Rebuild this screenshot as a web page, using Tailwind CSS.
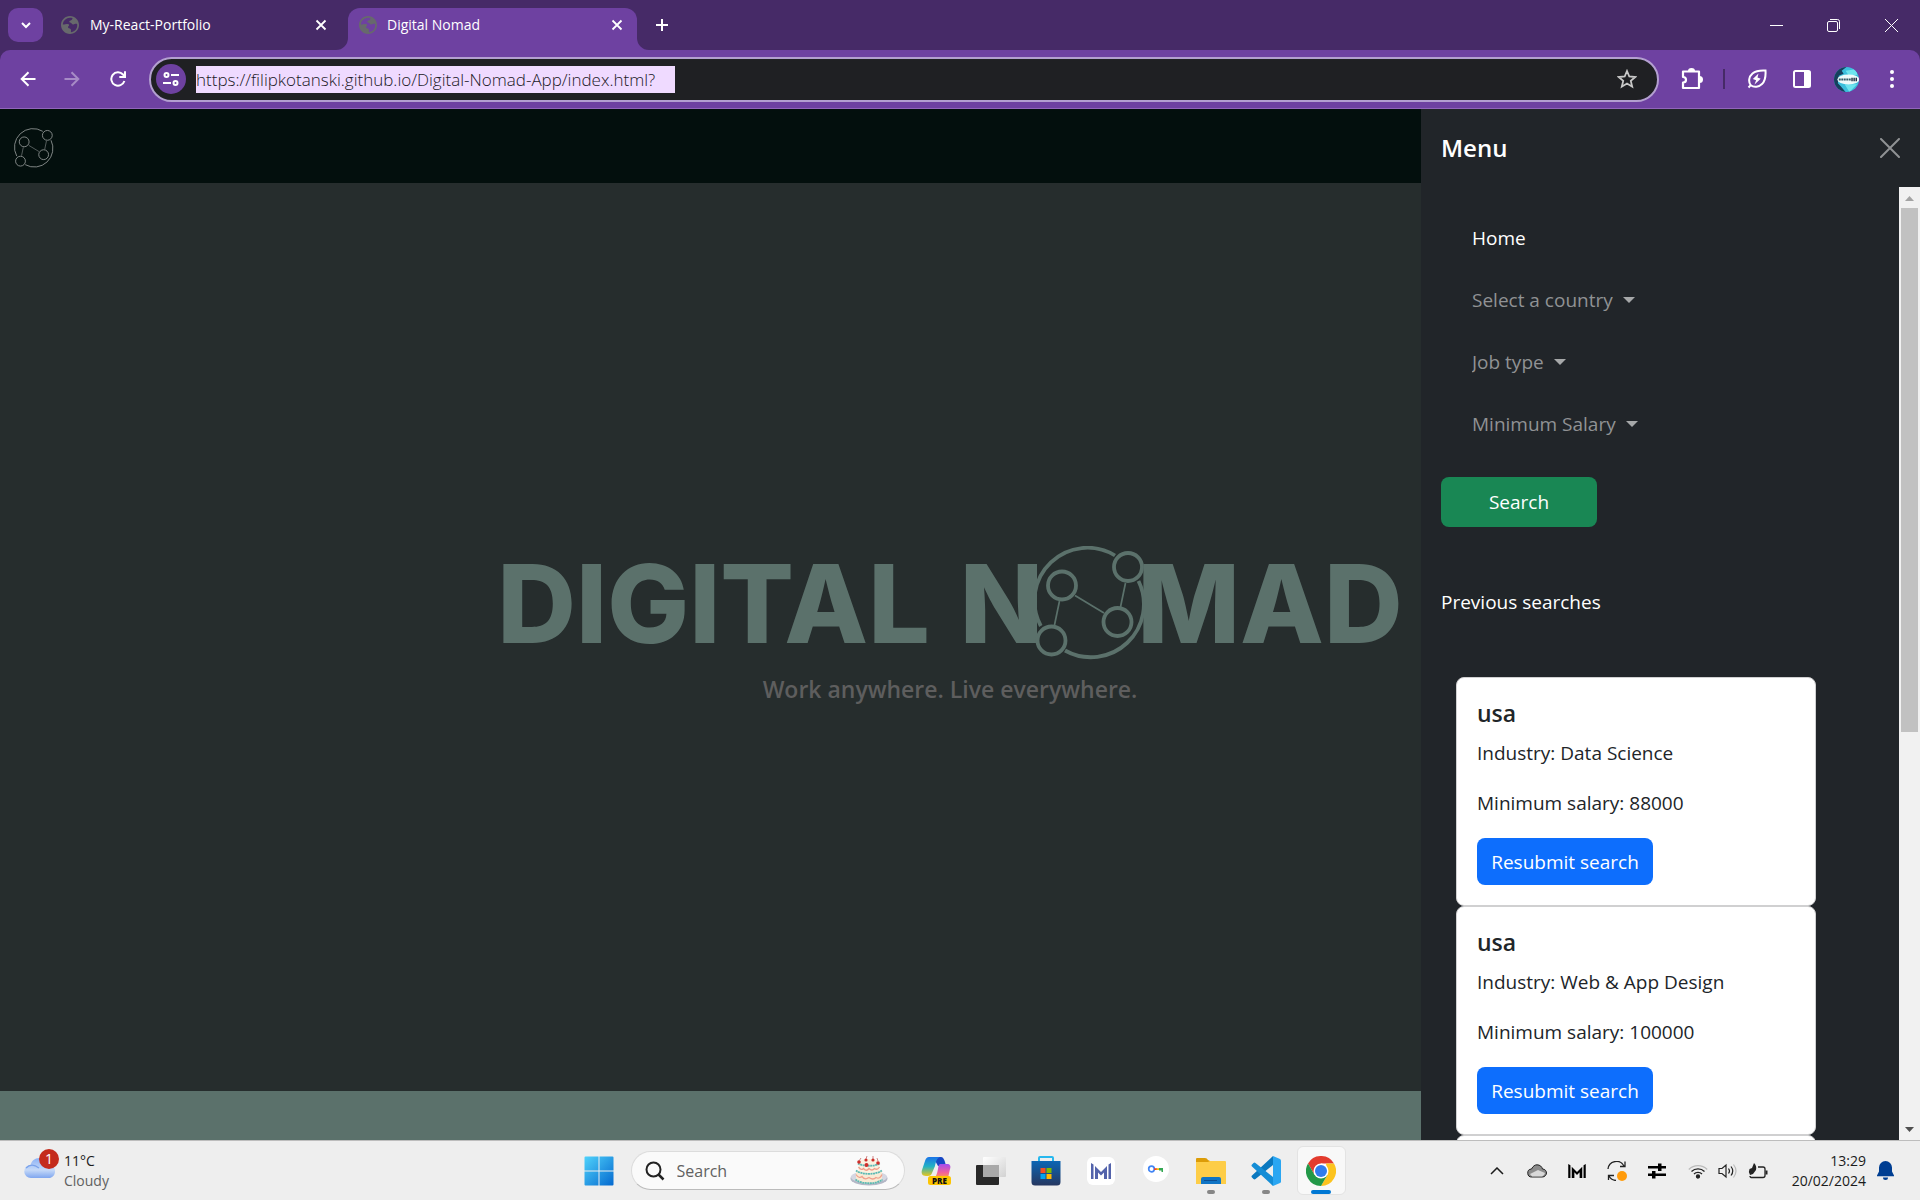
<!DOCTYPE html>
<html lang="en">
<head>
<meta charset="utf-8">
<meta name="viewport" content="width=device-width, initial-scale=1">
<title>Digital Nomad</title>
<script src="https://cdn.jsdelivr.net/npm/@tailwindcss/browser@4"></script>
</head>
<body class="flex h-screen flex-col overflow-hidden bg-[#6e41a1] font-['Open_Sans','Noto_Sans',sans-serif] text-white">

<svg class="hidden" aria-hidden="true">
  <symbol id="globe" viewBox="2 2 20 20"><path fill="#67696c" d="M12 2C6.48 2 2 6.48 2 12s4.48 10 10 10 10-4.48 10-10S17.52 2 12 2zm0 2c1 0 2 .2 2.900.5C14.500 6.500 13 7 12 7.200c-1.200.3-1 1.800.2 2 1.600.3 1.800 2 3.300 2.200 1.500.2 2.200-1.400 4.400-.4.300 1.800.1 3.500-.7 5-1.200 2.300-3.400 3.800-6 4-.6-1.200.6-2.500-.6-3.600-1-1-2.600-.4-2.800-2-.2-1.400 1.600-1.400 1.200-2.800C10.500 10.200 7 11.300 4 11.500 4.300 7.300 7.800 4 12 4z"/></symbol>
  <symbol id="tab-close" viewBox="0 0 12 12"><path d="M1.500 1.500l9 9M10.500 1.500l-9 9" fill="none" stroke="currentColor" stroke-width="1.800"/></symbol>
  <symbol id="orbit" viewBox="-1 -1 114 114">
    <g fill="none" stroke="currentColor">
      <path stroke-width="var(--ring)" d="M81 8.500A53 53 0 0 0 6.800 79M31 103.500A53 53 0 0 0 104.500 34"/>
      <circle cx="94" cy="20" r="14" stroke-width="var(--ring)"/>
      <circle cx="28" cy="38.500" r="14" stroke-width="var(--ring)"/>
      <circle cx="83.500" cy="75" r="14" stroke-width="var(--ring)"/>
      <circle cx="17.500" cy="93.500" r="14" stroke-width="var(--ring)"/>
      <path stroke-width="1.700" d="M25.500 54l-5 24M41 48.500l29 17.500M91.500 36l-5 24"/>
    </g>
  </symbol>
  <symbol id="maxthon" viewBox="0 0 20 16"><path fill="currentColor" d="M0 0l2.500 1.500V16H0zM20 0l-2.500 1.500V16H20zM4 3l6 6 6-6v13h-3V9.500l-3 3-3-3V16H4z"/></symbol>
</svg>

<!-- Tab strip -->
<header class="flex h-[50px] shrink-0 bg-[#462a67]">
  <button aria-label="Search tabs" class="mt-2 ml-2 flex h-[34px] w-[35px] items-center justify-center rounded-[10px] bg-[#6e41a1]">
    <svg class="h-3 w-3" viewBox="0 0 12 12" fill="none" stroke="#fff" stroke-width="2"><path d="M2 4l4 4 4-4"/></svg>
  </button>
  <div class="flex h-[50px] w-[305px] items-center pl-[18px] pr-[21px] text-sm">
    <svg class="h-[18px] w-[18px]"><use href="#globe"/></svg>
    <span class="ml-[11px] flex-1">My-React-Portfolio</span>
    <button aria-label="Close tab"><svg class="h-3 w-3"><use href="#tab-close"/></svg></button>
  </div>
  <div class="relative mt-2 flex h-[42px] w-[289px] items-center rounded-t-xl bg-[#6e41a1] pb-2 pl-[11px] pr-[14px] text-sm">
    <svg class="absolute bottom-0 -left-3 h-3 w-3" viewBox="0 0 12 12"><path fill="#6e41a1" d="M12 0v12H0A12 12 0 0 0 12 0z"/></svg>
    <svg class="absolute bottom-0 -right-3 h-3 w-3" viewBox="0 0 12 12"><path fill="#6e41a1" d="M0 0v12h12A12 12 0 0 1 0 0z"/></svg>
    <svg class="h-[18px] w-[18px]"><use href="#globe"/></svg>
    <span class="ml-[10px] flex-1">Digital Nomad</span>
    <button aria-label="Close tab"><svg class="h-3 w-3"><use href="#tab-close"/></svg></button>
  </div>
  <button aria-label="New tab" class="ml-[18px] flex w-[14px] items-center"><svg class="h-[14px] w-[14px]" viewBox="0 0 14 14"><path d="M7 1v12M1 7h12" stroke="#fff" stroke-width="2"/></svg></button>
  <div class="flex-1"></div>
  <button aria-label="Minimize" class="flex w-[56px] items-center justify-center"><svg class="h-[13px] w-[13px]" viewBox="0 0 13 13"><path d="M0 6.500h13" stroke="#fff"/></svg></button>
  <button aria-label="Restore" class="flex w-[58px] items-center justify-center"><svg class="h-[13px] w-[13px]" viewBox="0 0 13 13" fill="none" stroke="#fff"><rect x=".5" y="2.500" width="10" height="10" rx="1.500"/><path d="M3 .5h7.500a2 2 0 0 1 2 2V10"/></svg></button>
  <button aria-label="Close" class="flex w-[58px] items-center justify-center"><svg class="h-[13px] w-[13px]" viewBox="0 0 13 13"><path d="M0 0l13 13M13 0L0 13" stroke="#fff"/></svg></button>
</header>

<!-- Toolbar -->
<div class="shrink-0 bg-[#462a67]">
<nav aria-label="Browser" class="flex h-[59px] items-center rounded-t-[10px] border-b border-[#9165ba] bg-[#6e41a1] px-[6px]">
  <button aria-label="Back" class="flex w-11 justify-center"><svg class="h-4 w-4" viewBox="0 0 16 16" fill="none" stroke="#fff" stroke-width="2"><path d="M15.500 8H2M8.500 1.200L1.700 8l6.800 6.800"/></svg></button>
  <button aria-label="Forward" class="flex w-11 justify-center"><svg class="h-4 w-4" viewBox="0 0 16 16" fill="none" stroke="#a78bc6" stroke-width="2"><path d="M.5 8H14M7.500 1.200L14.300 8l-6.800 6.800"/></svg></button>
  <button aria-label="Reload" class="flex w-12 justify-center"><svg class="h-4 w-4" viewBox="0 0 16 16" fill="none" stroke="#fff" stroke-width="2"><path d="M14.400 10A6.700 6.700 0 1 1 13 3.500l1.800 2"/><path d="M15 .3V6H9.300"/></svg></button>
  <div class="ml-[7px] flex h-[45px] flex-1 items-center rounded-full border-2 border-[#b39fd0] bg-[#1f2023] pl-[5px] pr-[20px]">
    <button aria-label="Site information" class="flex h-[30px] w-[30px] items-center justify-center rounded-full bg-[#6e41a1]">
      <svg class="h-4 w-4" viewBox="0 0 16 16" fill="none" stroke="#fff" stroke-width="2"><circle cx="3.500" cy="4" r="2"/><path d="M8 4h8M0 12h8"/><circle cx="12.500" cy="12" r="2"/></svg>
    </button>
    <input aria-label="Address" type="text" value="https://filipkotanski.github.io/Digital-Nomad-App/index.html?" class="ml-[10px] h-[27px] w-[479px] bg-[#efdaff] text-[17px] font-light text-[#1b191f] outline-none">
    <div class="flex-1"></div>
    <button aria-label="Bookmark"><svg class="h-5 w-5" viewBox="0 0 20 20" fill="none" stroke="#c8c8c8" stroke-width="1.800"><path d="M10 2l2.300 5.500 6 .5-4.500 3.900 1.400 5.800L10 14.600l-5.200 3.100 1.400-5.800L1.700 8l6-.5z"/></svg></button>
  </div>
  <button aria-label="Extensions" class="ml-[10px] flex w-[45px] justify-center"><svg class="h-[22px] w-[22px]" viewBox="0 0 22 22" fill="none" stroke="#fff" stroke-width="2.200" stroke-linejoin="round"><path d="M2 3.500h16V20H2v-5.500c4 0 4-5.500 0-5.500z"/><path fill="#fff" stroke="none" d="M7 3a3.500 3 0 0 1 7 0zM18.500 8a3.500 3.500 0 0 1 0 7z"/></svg></button>
  <span class="ml-[9px] h-5 w-[2px] bg-[#462a67]"></span>
  <button aria-label="Energy saver" class="ml-[9px] flex w-[45px] justify-center"><svg class="h-5 w-5" viewBox="0 0 20 20" fill="none" stroke="#fff" stroke-width="2"><path d="M1.500 18.500l2.200-2.300C1 12.500 2 7.500 5.500 4.500 8.500 2 14 1.200 18.500 1.500c.3 4.500-.4 10.500-3.500 13.500s-8 3.800-11.300 1.200"/><path fill="#fff" stroke="none" d="M11.500 4.500L5.800 10l3.300 1.200-1.600 4.300 6.200-5.700-3.200-1.200z"/></svg></button>
  <button aria-label="Side panel" class="flex w-[45px] justify-center"><svg class="h-[18px] w-[18px]" viewBox="0 0 18 18"><rect x="1" y="1" width="16" height="16" rx="1.500" fill="none" stroke="#fff" stroke-width="2"/><path fill="#fff" d="M11 1h6v16h-6z"/></svg></button>
  <button aria-label="Profile" class="flex w-[45px] justify-center"><svg class="h-[25px] w-[25px]" viewBox="0 0 26 26"><defs><clipPath id="avatar"><circle cx="13" cy="13" r="13"/></clipPath></defs><g clip-path="url(#avatar)"><path fill="#3bbfdc" d="M0 0h26v26H0z"/><path fill="#173f5d" d="M0 0h13L8 4l2 3-5 2-1 8 3 3 5 6H0z"/><path fill="#6de4ee" d="M12 4l12-2v6l-8 2zM11 18l13 0-8 8z"/><ellipse cx="15" cy="13" rx="11.500" ry="5.200" fill="#eefafa"/><path stroke="#345b68" stroke-width="2.200" stroke-dasharray="2 .6" d="M5 13h13"/><path stroke="#234" stroke-width="3.500" stroke-dasharray="1.500 .7" d="M18 13h6"/></g></svg></button>
  <button aria-label="Browser menu" class="flex w-[45px] justify-center"><svg class="h-5 w-1" viewBox="0 0 4 20" fill="#fff"><circle cx="2" cy="3" r="2"/><circle cx="2" cy="10" r="2"/><circle cx="2" cy="17" r="2"/></svg></button>
</nav>
</div>

<!-- Web page -->
<div class="relative flex min-h-0 flex-1 flex-col overflow-hidden bg-[#262d2d]">
  <div class="flex h-[74px] shrink-0 items-center bg-[#030f0d] pt-1 pl-[14px]">
    <a href="#" aria-label="Digital Nomad home"><svg class="h-10 w-10 text-[#8b908f] [--ring:2.600]"><use href="#orbit"/></svg></a>
  </div>

  <main class="flex flex-1 flex-col items-center pt-[360px] pr-[20px]">
    <h1 class="flex h-[120px] items-center font-['Inter',sans-serif] text-[109px] leading-[120px] font-extrabold text-[#5b716b]">
      <span>DIGITAL</span>
      <span class="ml-[30px]">N</span>
      <svg class="-mx-[10px] h-[114px] w-[114px] [--ring:3.800]" role="img" aria-label="O"><use href="#orbit"/></svg>
      <span>MAD</span>
    </h1>
    <p class="mt-2 text-[23px] leading-9 font-semibold text-[#5e5e5e]">Work anywhere. Live everywhere.</p>
  </main>

  <footer class="h-[49px] shrink-0 bg-[#5b716b]"></footer>

  <!-- Off-canvas menu -->
  <aside class="absolute inset-y-0 right-0 flex w-[499px] flex-col bg-[#212529]">
    <div class="flex h-[78px] shrink-0 items-center justify-between px-5">
      <h2 class="text-2xl font-semibold">Menu</h2>
      <button aria-label="Close menu"><svg class="h-5 w-5" viewBox="0 0 20 20"><path d="M1 1l18 18M19 1L1 19" stroke="#909294" stroke-width="2" stroke-linecap="round"/></svg></button>
    </div>
    <div class="flex min-h-0 flex-1">
      <div class="flex-1 overflow-hidden pt-5 pl-5 text-[19px] leading-[30px]">
        <div class="pl-[31px]">
          <a href="#" class="flex h-[62px] items-center">Home</a>
          <label class="flex h-[62px] items-center gap-[10px] text-[#909294]">
            <select aria-label="Country" class="appearance-none"><option>Select a country</option></select>
            <svg class="h-[6px] w-3" viewBox="0 0 12 6"><path fill="#a6a8a9" d="M0 0h12L6 6z"/></svg>
          </label>
          <label class="flex h-[62px] items-center gap-[10px] text-[#909294]">
            <select aria-label="Job type" class="appearance-none"><option>Job type</option></select>
            <svg class="h-[6px] w-3" viewBox="0 0 12 6"><path fill="#a6a8a9" d="M0 0h12L6 6z"/></svg>
          </label>
          <label class="flex h-[62px] items-center gap-[10px] text-[#909294]">
            <select aria-label="Minimum salary" class="appearance-none"><option>Minimum Salary</option></select>
            <svg class="h-[6px] w-3" viewBox="0 0 12 6"><path fill="#a6a8a9" d="M0 0h12L6 6z"/></svg>
          </label>
        </div>
        <button class="mt-[22px] block h-[50px] w-[156px] rounded-lg bg-[#198754]">Search</button>
        <p class="mt-[60px]">Previous searches</p>
        <div class="mt-[60px] ml-[15px] w-[360px] text-[#212529]">
          <article class="rounded-lg border border-[#d0d0d1] bg-white p-5">
            <h3 class="mb-[10px] text-[23px] font-semibold">usa</h3>
            <p class="mb-5">Industry: Data Science</p>
            <p class="mb-5">Minimum salary: 88000</p>
            <button class="block h-[47px] w-[176px] rounded-lg bg-[#0d6efd] text-white">Resubmit search</button>
          </article>
          <article class="rounded-lg border border-[#d0d0d1] bg-white p-5">
            <h3 class="mb-[10px] text-[23px] font-semibold">usa</h3>
            <p class="mb-5">Industry: Web &amp; App Design</p>
            <p class="mb-5">Minimum salary: 100000</p>
            <button class="block h-[47px] w-[176px] rounded-lg bg-[#0d6efd] text-white">Resubmit search</button>
          </article>
          <div class="h-20 rounded-lg border border-[#d0d0d1] bg-white"></div>
        </div>
      </div>
      <div class="flex w-[21px] shrink-0 flex-col items-center bg-[#f1f1f1]">
        <svg class="h-[21px] w-[9px] shrink-0" viewBox="0 0 9 21"><path fill="#a3a3a3" d="M0 14h9L4.500 9z"/></svg>
        <div class="h-[55%] w-[17px] bg-[#c1c1c1]"></div>
        <div class="flex-1"></div>
        <svg class="h-[21px] w-[9px] shrink-0" viewBox="0 0 9 21"><path fill="#505050" d="M0 8h9L4.500 13z"/></svg>
      </div>
    </div>
  </aside>
</div>

<!-- Taskbar -->
<footer class="grid h-[60px] shrink-0 grid-cols-[1fr_auto_1fr] items-center border-t border-[#bdbdbd] bg-[#eeeeee] text-[#1b1b1b]">
  <button aria-label="Weather" class="flex items-center pl-6 text-left text-sm leading-5">
    <svg class="h-12 w-9" viewBox="0 4 36 48"><defs><linearGradient id="cloud" x2="0" y2="1"><stop stop-color="#8db2f5"/><stop offset=".6" stop-color="#c5d9f8"/><stop offset="1" stop-color="#7fa6ef"/></linearGradient></defs><path fill="url(#cloud)" d="M7 35a6.500 6.500 0 0 1-.5-13c1-4 4-7 9-7 5.500 0 8.500 3.500 9 8 4-1 7 2 6.500 6-.3 3.500-3 6-6 6z"/><path d="M2 25c4-4 9-3 13 0" fill="none" stroke="#7aa2ea" stroke-width="1.200"/><circle cx="25" cy="16" r="10" fill="#c42b1c"/><text x="25" y="21" text-anchor="middle" font-size="14" fill="#fff" font-family="Open Sans">1</text></svg>
    <span class="ml-1"><span class="block">11°C</span><span class="block text-[#616161]">Cloudy</span></span>
  </button>

  <div class="flex h-[59px] items-center">
    <button aria-label="Start" class="flex w-[55px] justify-center"><svg class="h-[30px] w-[30px]" viewBox="0 0 30 30"><defs><linearGradient id="win" x2="1" y2="1"><stop stop-color="#4fd2fb"/><stop offset="1" stop-color="#0569cf"/></linearGradient></defs><path fill="url(#win)" d="M.5 1.500a1 1 0 0 1 1-1H14.500v14H.5zM15.500.5h13a1 1 0 0 1 1 1v13h-14zM.5 15.500h14v14h-13a1 1 0 0 1-1-1zM15.500 15.500h14v13a1 1 0 0 1-1 1h-13z"/></svg></button>
    <label class="mx-1 flex h-[39px] w-[274px] items-center rounded-full border border-[#dcdcdc] border-b-[#bbbbbb] bg-[#fafafa] pl-[13px] pr-[16px]">
      <svg class="h-5 w-5" viewBox="0 0 20 20" fill="none" stroke="#222" stroke-width="2"><circle cx="8.500" cy="8.500" r="7"/><path stroke-width="2.500" d="M13.500 13.500l5 5"/></svg>
      <input aria-label="Search Windows" type="search" placeholder="Search" class="ml-3 min-w-0 flex-1 bg-transparent text-base outline-none placeholder:text-[#616161]">
      <svg class="h-[30px] w-[38px]" viewBox="0 0 38 30"><ellipse cx="19" cy="22.500" rx="18.500" ry="7" fill="#b4b7c6"/><ellipse cx="19" cy="21" rx="18" ry="6" fill="#d5d7e2"/><path fill="#f8ead4" d="M6 15h26v9c-4 5-22 5-26 0z"/><path fill="#fbf1df" d="M8.500 6h21v11c-4 3-17 3-21 0z"/><ellipse cx="19" cy="6.500" rx="11" ry="3.500" fill="#fbf1df"/><g fill="none" stroke-width="1.800"><path stroke="#5bb9b3" stroke-dasharray="2 .5" d="M8 7.500c5 3 17 3 22 0M6 14.500c6 4.500 20 4.500 26 0M5.500 23.500c6 5 21 5 27 0"/><path stroke="#f0a08c" stroke-width="1.300" d="M8.500 11q3 4 5 1.500 3 3.500 5.500 0 3 3 5.500 0 3 2 5-1.500M6 18.500q3 4.500 6 2 3 4 7 1 4 3 7 0 4 2 6-3"/></g><g fill="#cf2e2a"><circle cx="9" cy="6" r="1.800"/><circle cx="16" cy="4" r="1.600"/><circle cx="23" cy="4" r="1.600"/><circle cx="28" cy="7" r="1.800"/><circle cx="16.500" cy="9" r="2"/></g><path stroke="#b55" d="M9 5l2-3M16 3l1-3M23 3V0M28 5l-1-3" stroke-width=".7"/></svg>
    </label>
    <button aria-label="Copilot preview" class="flex w-[55px] justify-center"><svg class="h-[30px] w-[30px]" viewBox="0 0 30 30"><defs><linearGradient id="cpa" x2="0" y2="1"><stop stop-color="#1b74e8"/><stop offset=".5" stop-color="#22b2c4"/><stop offset="1" stop-color="#e8c61c"/></linearGradient><linearGradient id="cpb" x2="0" y2="1"><stop stop-color="#a44cf0"/><stop offset=".6" stop-color="#f0609c"/><stop offset="1" stop-color="#ff9f4a"/></linearGradient></defs><path fill="#1747c4" d="M12 1h8c2 0 3 2 4 5l1 4h-8z"/><path fill="url(#cpa)" d="M8 1h11c-3 1-4 4-5 9l-3 7c-1 3-3 3-6 3-4 0-5-3-4-6L4 5c1-3 2-4 4-4z"/><path fill="url(#cpb)" d="M19 8h7c3 0 4 2 3 5l-2 9H13c2-1 3-4 4-9 .5-2 0-4 2-5z"/><rect x="7" y="20" width="23" height="9" rx="2.500" fill="#fdc501"/><text x="18.500" y="27.500" text-anchor="middle" font-size="8" font-weight="800" fill="#111" font-family="Open Sans">PRE</text></svg></button>
    <button aria-label="Task view" class="flex w-[55px] justify-center"><svg class="h-7 w-[30px]" viewBox="0 0 30 28"><defs><linearGradient id="tv" x2="1" y2="1"><stop stop-color="#fff"/><stop offset="1" stop-color="#d2d2d2"/></linearGradient></defs><rect y="8" width="23" height="20" rx="1" fill="#282828"/><rect x="7" width="23" height="20" rx="1" fill="url(#tv)"/><path fill="#a9a9a9" d="M7 8h16v12H7z"/></svg></button>
    <button aria-label="Microsoft Store" class="flex w-[55px] justify-center"><svg class="h-[30px] w-[30px]" viewBox="0 0 30 30"><defs><linearGradient id="ms" x2="0" y2="1"><stop stop-color="#0c66b4"/><stop offset="1" stop-color="#263760"/></linearGradient></defs><path d="M8 6V2q0-1 1-1h12q1 0 1 1v4" fill="none" stroke="#27b8ee" stroke-width="2"/><path fill="url(#ms)" d="M.5 5h29v21q0 3.500-3.500 3.500H4Q.5 29.500.5 26z"/><path fill="#f25022" d="M9.500 12h5v5h-5z"/><path fill="#7fba00" d="M15.500 12h5v5h-5z"/><path fill="#00a4ef" d="M9.500 18h5v5h-5z"/><path fill="#ffb900" d="M15.500 18h5v5h-5z"/></svg></button>
    <button aria-label="M app" class="flex w-[55px] justify-center"><span class="flex h-7 w-7 items-center justify-center rounded-md bg-white text-[#5363ab]"><svg class="h-4 w-5"><use href="#maxthon"/></svg></span></button>
    <button aria-label="Password manager" class="flex w-[55px] justify-center pb-1"><svg class="h-[26px] w-[26px]" viewBox="0 0 26 26"><circle cx="13" cy="13" r="13" fill="#fff"/><circle cx="8.500" cy="13" r="2.800" fill="none" stroke="#4285f4" stroke-width="1.700"/><path fill="#ea4335" d="M11 12.200h3v1.800h-3z"/><path fill="#fbbc04" d="M13.500 12.200h3v1.800h-3z"/><path fill="#34a853" d="M16 12h4v4h-1.500v-1.500H16z"/></svg></button>
    <button aria-label="File Explorer" class="relative flex w-[55px] justify-center"><svg class="h-7 w-[30px]" viewBox="0 0 30 28"><path fill="#dc9c07" d="M0 2q0-1 1-1h8q2 0 3 2l2 1v6H0z"/><path fill="#fdcd48" d="M0 5h12l2-1h15q1 0 1 1v22H0z"/><path fill="#0f74c5" d="M5 27v-5q0-2 2-2h16q2 0 2 2v5z"/><path stroke="#0a4d92" d="M8 23.500h13"/></svg><span class="absolute -bottom-[9px] h-1 w-2 rounded-full bg-[#868686]"></span></button>
    <button aria-label="Visual Studio Code" class="relative flex w-[55px] justify-center"><svg class="h-[30px] w-[30px]" viewBox="0 0 30 30"><path fill="#0a78bf" d="M22 0L1 19.500q-1 1 0 2l1.500 1.500q1 .8 2 0L22 9z"/><path fill="#148dd6" d="M22 30L1 10.500q-1-1 0-2L2.500 7q1-.8 2 0L22 21z"/><path fill="#2aa6f2" d="M22 0l7 3q1 .5 1 1.500v21q0 1-1 1.500l-7 3z"/></svg><span class="absolute -bottom-2 h-1 w-2 rounded-full bg-[#868686]"></span></button>
    <button aria-label="Google Chrome" class="flex w-[55px] justify-center"><span class="relative flex h-[49px] w-[49px] items-center justify-center rounded-md border border-[#e3e3e3] bg-[#f8f8f8]"><svg class="h-[30px] w-[30px]" viewBox="0 0 30 30"><path fill="#e33b2e" d="M2 7.500A15 15 0 0 1 28 7.500H15L8.500 18.700z"/><path fill="#fcc31e" d="M28 7.500A15 15 0 0 1 15 30l6.500-11.300L20 7.500z"/><path fill="#229848" d="M2 7.500A15 15 0 0 0 15 30l6.500-11.200L15 20l-6.500-1.300z"/><circle cx="15" cy="15" r="7.500" fill="#fff"/><circle cx="15" cy="15" r="6" fill="#2f7ced"/></svg><span class="absolute bottom-0 h-1 w-5 rounded-full bg-[#0078d4]"></span></span></button>
  </div>

  <div class="flex items-center justify-end pr-[26px]">
    <button aria-label="Show hidden icons" class="flex w-10 justify-center"><svg class="h-2 w-[14px]" viewBox="0 0 14 8" fill="none" stroke="#1b1b1b" stroke-width="1.500"><path d="M1 7l6-6 6 6"/></svg></button>
    <button aria-label="OneDrive" class="flex w-10 justify-center"><svg class="h-[14px] w-5" viewBox="0 0 20 14"><path fill="#8b8b8b" stroke="#222" d="M5 13a4 4 0 0 1-.5-8C6 2 8 .8 10 .8c3 0 5 2 5.500 4.200 2.500 0 4 2 4 4s-2 4-4 4z"/><path fill="#d9d9d9" d="M3 10l8-4 7 3-1 2-2 1.500H5z"/></svg></button>
    <button aria-label="M tray app" class="flex w-10 justify-center text-black"><svg class="h-[14px] w-[18px]"><use href="#maxthon"/></svg></button>
    <button aria-label="Windows Update" class="flex w-10 justify-center"><svg class="h-5 w-5" viewBox="0 0 20 20" fill="none" stroke="#222" stroke-width="1.300"><path d="M1 8a8.500 8.500 0 0 1 16-3M18 .5V5.500h-5M9 19.500A8.500 8.500 0 0 1 2 15M1.500 19v-4.500H7"/><circle cx="15" cy="15" r="5" fill="#ff9b0b" stroke="none"/></svg></button>
    <button aria-label="Audio switch" class="flex w-10 justify-center"><svg class="h-4 w-[18px]" viewBox="0 0 18 16" fill="#000"><path d="M0 3h18v2.500H0zM0 10.500h18V13H0zM10 .5h3.500V8H10zM4 8h3.500v7.500H4z"/></svg></button>
    <button aria-label="Network, volume and battery" class="flex pl-[3px]">
      <span class="flex w-[30px] justify-center pl-[6px]"><svg class="h-4 w-5" viewBox="0 0 20 16" fill="none" stroke="#222" stroke-width="1.300"><path stroke="#bbb" d="M.8 6.500a13 13 0 0 1 18.400 0"/><path d="M3.500 8.500a9.300 9.300 0 0 1 13 0M6 11a5.600 5.600 0 0 1 8 0"/><circle cx="10" cy="13.500" r="1.500" fill="#222"/></svg></span>
      <span class="flex w-[30px] justify-center pl-[6px]"><svg class="h-4 w-5" viewBox="0 0 20 16" fill="none" stroke="#222" stroke-width="1.200"><path d="M1 5.500h3L8 2v12L4 10.500H1zM10.500 5.500q2 2.500 0 5M13 3.500q3.500 4.500 0 9"/><path stroke="#bbb" d="M15.500 1.500q5 6.500 0 13"/></svg></span>
      <span class="flex w-[30px] justify-center pl-[6px]"><svg class="h-4 w-5" viewBox="0 0 20 16" fill="none" stroke="#222" stroke-width="1.300"><path d="M10 4h5q2 0 2 2v6.500q0 2-2 2H4q-2 0-2-1.500"/><path fill="#222" stroke="none" d="M17.500 7.500h2v4h-2zM6 0q3 3 2 7l-3 4-3 1q-2-3-.5-6L4 5z"/></svg></span>
    </button>
    <button aria-label="Clock" class="ml-[10px] w-[86px] text-right text-sm leading-5"><span class="block">13:29</span><span class="block">20/02/2024</span></button>
    <button aria-label="Notifications" class="ml-[11px]"><svg class="h-[19px] w-[17px]" viewBox="0 0 17 19" fill="#003e92"><path d="M8.500 0A6.500 6.500 0 0 1 15 6.500v4l2 4v.8H0v-.8l2-4v-4A6.500 6.500 0 0 1 8.500 0zM6 16.500h5a2.500 2.500 0 0 1-5 0z"/></svg></button>
  </div>
</footer>
</body>
</html>
